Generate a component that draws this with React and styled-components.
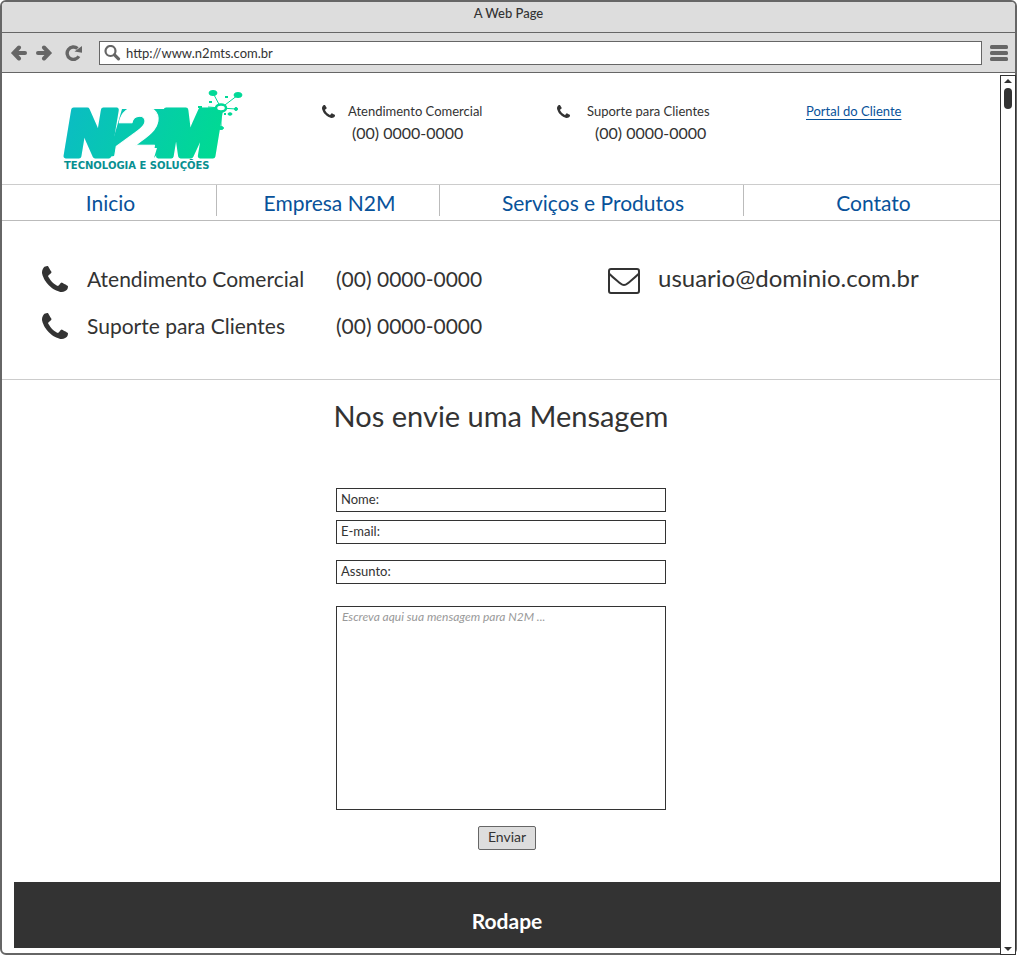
import React from "react";
import styled, { createGlobalStyle } from "styled-components";

const GlobalStyle = createGlobalStyle`
  *, *::before, *::after { box-sizing: border-box; }
  body { margin: 0; background: #fff; color: #333; font: 13px/20px Lato, "Liberation Sans", sans-serif; }
  button, input, textarea { font: inherit; color: inherit; border-radius: 0; }
  h1, h2, p { margin: 0; font-weight: 400; }
`;

const Window = styled.div`
  display: flex;
  flex-direction: column;
  min-height: 100vh;
  margin-right: 2px;
  border: 2px solid #666;
  border-radius: 6px;
`;
const TitleBar = styled.header`
  height: 31px;
  padding-top: 1px;
  text-align: center;
  font-weight: 500;
  background: #ddd;
  border-bottom: 1px solid #666;
  border-radius: 4px 4px 0 0;
`;
const Toolbar = styled.div`
  display: flex;
  align-items: center;
  height: 40px;
  padding: 0 7px 0 8px;
  background: #ddd;
  border-bottom: 1px solid #666;
`;
const IconButton = styled.button`
  display: flex;
  padding: 0;
  margin-right: ${(p) => p.$gap || 0}px;
  border: 0;
  background: none;
  color: #666;
`;
const AddressBar = styled.label`
  display: flex;
  flex: 1;
  align-items: center;
  gap: 5px;
  height: 24px;
  margin-right: 8px;
  padding-left: 4px;
  background: #fff;
  border: 1px solid #666;
  color: #666;
`;
const PlainInput = styled.input`
  flex: 1;
  min-width: 0;
  padding: 0;
  border: 0;
  outline: 0;
  background: transparent;
  color: #333;
`;
const Viewport = styled.div`
  display: flex;
  flex: 1;
`;
const Page = styled.main`
  display: flex;
  flex-direction: column;
  flex: 1;
  min-width: 0;
`;
const ScrollBar = styled.div`
  display: flex;
  flex-direction: column;
  align-items: center;
  width: 16px;
  margin: 2px -1px -2px 0;
  padding: 3px 0;
  background: #fff;
  border: 1px solid #333;
`;
const Thumb = styled.div`
  flex: 1;
  width: 8px;
  margin: 5px 0;
  &::before {
    content: "";
    display: block;
    height: 21px;
    border-radius: 4px;
    background: #333;
  }
`;
const Masthead = styled.div`
  display: grid;
  grid-template-columns: 320fr 235fr 249fr 194fr;
  height: 111px;
`;
const LogoCell = styled.div`
  padding: 12px 0 0 60px;
`;
const QuickContact = styled.div`
  display: flex;
  gap: ${(p) => p.$gap}px;
  padding-top: 28px;
  svg { margin-top: 4px; flex: none; }
`;
const QuickText = styled.div`
  padding-left: ${(p) => p.$inset}px;
`;
const QuickNumber = styled.p`
  padding-left: ${(p) => p.$indent}px;
  font-size: 16px;
  line-height: 24px;
`;
const PortalCell = styled.div`
  padding-top: 28px;
`;
const PortalLink = styled.a`
  color: #08529a;
  text-underline-offset: 3px;
`;
const Nav = styled.nav`
  display: grid;
  grid-template-columns: 215fr 223fr 304fr 256fr;
  height: 37px;
  border-top: 1px solid #ccc;
  border-bottom: 1px solid #bbb;
`;
const NavLink = styled.a`
  height: 31px;
  padding: 5px 0 0 3px;
  border-right: 1px solid #bbb;
  color: #08529a;
  font-size: 21px;
  line-height: 26px;
  text-align: center;
  text-decoration: none;
  &:last-child { border-right: 0; }
`;
const Contacts = styled.section`
  display: grid;
  grid-template-columns: 606fr 392fr;
  height: 159px;
  padding-top: 44px;
  border-bottom: 1px solid #ccc;
  font-size: 21px;
  line-height: 28px;
`;
const PhoneList = styled.div`
  display: flex;
  flex-direction: column;
  gap: 19px;
  padding-left: 40px;
`;
const PhoneRow = styled.div`
  display: grid;
  grid-template-columns: 45px 249px 1fr;
  align-items: center;
`;
const MailRow = styled.div`
  display: flex;
  align-items: flex-start;
  gap: 18px;
  font-size: 24px;
  line-height: 26px;
  svg { margin-top: 3px; }
`;
const Form = styled.form`
  display: flex;
  flex-direction: column;
  align-items: center;
  padding-top: 18px;
`;
const FormTitle = styled.h1`
  margin-bottom: 54px;
  font-size: 29px;
  line-height: 36px;
`;
const Field = styled.label`
  display: flex;
  gap: 4px;
  width: 330px;
  max-width: 100%;
  height: 24px;
  margin-bottom: ${(p) => p.$after}px;
  padding: 0 4px;
  border: 1px solid #333;
`;
const Message = styled.textarea`
  width: 330px;
  max-width: 100%;
  height: 204px;
  padding: 0 5px;
  border: 1px solid #333;
  outline: 0;
  resize: none;
  &::placeholder { color: #999; font-size: 12px; font-style: italic; opacity: 1; }
`;
const Submit = styled.button`
  width: 58px;
  height: 24px;
  margin: 16px 0 32px 12px;
  padding: 0 0 2px;
  background: #ddd;
  border: 1px solid #666;
  border-radius: 2px;
  font-size: 14px;
`;
const Footer = styled.footer`
  margin: 0 0 5px 12px;
  padding: 26px 0 14px;
  background: #333;
  color: #fff;
  font-size: 21px;
  font-weight: 700;
  line-height: 26px;
  text-align: center;
`;

const PhoneIcon = ({ size }) => (
  <svg width={size} height={size} viewBox="192 128 1408 1408" fill="#333" aria-hidden="true">
    <path d="M1600 1240q0 27-10 70.5t-21 68.5q-21 50-122 106-94 51-186 51-27 0-53-3.5t-57.5-12.5-47-14.5-55.5-20.5-49-18q-98-35-175-83-127-79-264-216t-216-264q-48-77-83-175-3-9-18-49t-20.5-55.5-14.5-47-12.5-57.5-3.5-53q0-92 51-186 56-101 106-122 25-11 68.5-21t70.5-10q14 0 21 3 18 6 53 76 11 19 30 54t35 63.5 31 53.5q3 4 17.5 25t21.5 35.5 7 28.5q0 20-28.5 50t-62 55-62 53-28.5 46q0 9 5 22.5t8.5 20.5 14 24 11.5 19q76 137 174 235t235 174q2 1 19 11.5t24 14 20.5 8.5 22.5 5q18 0 46-28.5t53-62 55-62 50-28.5q14 0 28.5 7t35.5 21.5 25 17.5q25 15 53.5 31t63.5 35 54 30q70 35 76 53 3 7 3 21z" />
  </svg>
);
const ArrowIcon = ({ flip }) => (
  <svg width="18" height="16" viewBox="0 0 18 16" aria-hidden="true">
    <g transform={flip ? "matrix(-1 0 0 1 18 0)" : undefined} fill="none" stroke="currentColor" strokeWidth="4">
      <path d="M5 8H15" strokeLinecap="round" />
      <path d="M9 2.500 3.700 8 9 13.500" strokeWidth="4" strokeLinecap="round" />
    </g>
  </svg>
);
const ReloadIcon = () => (
  <svg width="17" height="16" viewBox="0 0 17 16" aria-hidden="true">
    <path d="M13.800 11.200A6.200 6.200 0 1 1 12.500 3.600" fill="none" stroke="currentColor" strokeWidth="3.400" />
    <path d="M17 1V7.800L9.500 6.500Z" fill="currentColor" />
  </svg>
);
const SearchIcon = () => (
  <svg width="17" height="16" viewBox="0 0 17 16" fill="none" stroke="currentColor" aria-hidden="true">
    <circle cx="6.500" cy="6" r="5" strokeWidth="2.200" />
    <path d="M10.500 9.800 14.500 13.800" strokeWidth="3.200" strokeLinecap="round" />
  </svg>
);
const MenuIcon = () => (
  <svg width="18" height="16" viewBox="0 0 18 16" fill="currentColor" aria-hidden="true">
    <rect width="18" height="4" rx="1.500" />
    <rect y="6" width="18" height="4" rx="1.500" />
    <rect y="12" width="18" height="4" rx="1.500" />
  </svg>
);
const MailIcon = () => (
  <svg width="32" height="26" viewBox="0 0 32 26" fill="none" stroke="#333" strokeWidth="2" aria-hidden="true">
    <rect x="1" y="1" width="30" height="24" rx="2" />
    <path d="M1.500 6C5 9.500 9 12.500 12.500 15.500Q16 18.500 19.500 15.500C23 12.500 27 9.500 30.500 6" />
  </svg>
);
const Caret = ({ down }) => (
  <svg width="8" height="4" viewBox="0 0 8 4" fill="#333" aria-hidden="true">
    <path d={down ? "M0 0H8L4 4Z" : "M0 4H8L4 0Z"} />
  </svg>
);
const Logo = () => (
  <svg width="184" height="88" viewBox="62 85 184 88" role="img" aria-label="N2M Tecnologia e Soluções">
    <defs>
      <linearGradient id="brand" gradientUnits="userSpaceOnUse" x1="66" y1="110" x2="206" y2="170">
        <stop offset="0" stopColor="#0bbcc4" />
        <stop offset="1" stopColor="#00da93" />
      </linearGradient>
    </defs>
    <path d="M122 109H180L170 148H162L154 158 157 148H134L114 156 108 157Z" fill="url(#brand)" />
    <text x="66" y="156" fontFamily="Inter, sans-serif" fontWeight="900" fontStyle="italic" fontSize="63" fill="url(#brand)" stroke="url(#brand)" strokeWidth="5" strokeLinejoin="round">
      N<tspan fill="#fff" stroke="#fff" strokeWidth="1" fontSize="68">2</tspan>M
    </text>
    <text x="64" y="169" fontFamily="DejaVu Sans, sans-serif" fontWeight="700" fontSize="10" fill="#078f91">TECNOLOGIA E SOLUÇÕES</text>
    <g stroke="#00d997" fill="#00d997">
      <path d="M221 108 213 93M221 108 238 95M221 108 236 109M221 108V128M221 108 208 107" fill="none" />
      <ellipse cx="221" cy="108" rx="5" ry="3.500" fill="#fff" strokeWidth="2.500" />
      <ellipse cx="213" cy="93" rx="4" ry="2.500" />
      <ellipse cx="238" cy="95" rx="4" ry="2.500" />
      <circle cx="236" cy="109" r="1.500" />
      <ellipse cx="221" cy="128" rx="2.500" ry="1.500" />
      <ellipse cx="230" cy="114" rx="2" ry="1.200" />
      <path d="M198 107h4M209 102h3M225 97h3M224 114h2" strokeWidth="2" />
    </g>
  </svg>
);

const navItems = ["Inicio", "Empresa N2M", "Serviços e Produtos", "Contato"];
const phones = ["Atendimento Comercial", "Suporte para Clientes"];
const number = "(00) 0000-0000";

export default function App() {
  return (
    <>
      <GlobalStyle />
      <Window>
        <TitleBar>A Web Page</TitleBar>
        <Toolbar>
          <IconButton $gap={7} aria-label="Voltar"><ArrowIcon /></IconButton>
          <IconButton $gap={12} aria-label="Avançar"><ArrowIcon flip /></IconButton>
          <IconButton $gap={17} aria-label="Recarregar"><ReloadIcon /></IconButton>
          <AddressBar>
            <SearchIcon />
            <PlainInput type="text" aria-label="Endereço" defaultValue="http://www.n2mts.com.br" />
          </AddressBar>
          <IconButton aria-label="Menu"><MenuIcon /></IconButton>
        </Toolbar>
        <Viewport>
          <Page>
            <Masthead>
              <LogoCell><Logo /></LogoCell>
              {phones.map((name, i) => (
                <QuickContact key={name} $gap={13}>
                  <PhoneIcon size={13} />
                  <QuickText $inset={i ? 4 : 0}>
                    <p>{name}</p>
                    <QuickNumber $indent={i ? 8 : 4}>{number}</QuickNumber>
                  </QuickText>
                </QuickContact>
              ))}
              <PortalCell><PortalLink href="#portal">Portal do Cliente</PortalLink></PortalCell>
            </Masthead>
            <Nav>
              {navItems.map((item) => <NavLink key={item} href="#">{item}</NavLink>)}
            </Nav>
            <Contacts>
              <PhoneList>
                {phones.map((name) => (
                  <PhoneRow key={name}>
                    <PhoneIcon size={26} />
                    <p>{name}</p>
                    <p>{number}</p>
                  </PhoneRow>
                ))}
              </PhoneList>
              <MailRow>
                <MailIcon />
                <p>usuario@dominio.com.br</p>
              </MailRow>
            </Contacts>
            <Form onSubmit={(e) => e.preventDefault()}>
              <FormTitle>Nos envie uma Mensagem</FormTitle>
              <Field $after={8}>Nome:<PlainInput type="text" name="nome" /></Field>
              <Field $after={16}>E-mail:<PlainInput type="email" name="email" /></Field>
              <Field $after={22}>Assunto:<PlainInput type="text" name="assunto" /></Field>
              <Message aria-label="Mensagem" placeholder="Escreva aqui sua mensagem para N2M ..." />
              <Submit type="submit">Enviar</Submit>
            </Form>
            <Footer>Rodape</Footer>
          </Page>
          <ScrollBar aria-hidden="true">
            <Caret />
            <Thumb />
            <Caret down />
          </ScrollBar>
        </Viewport>
      </Window>
    </>
  );
}
